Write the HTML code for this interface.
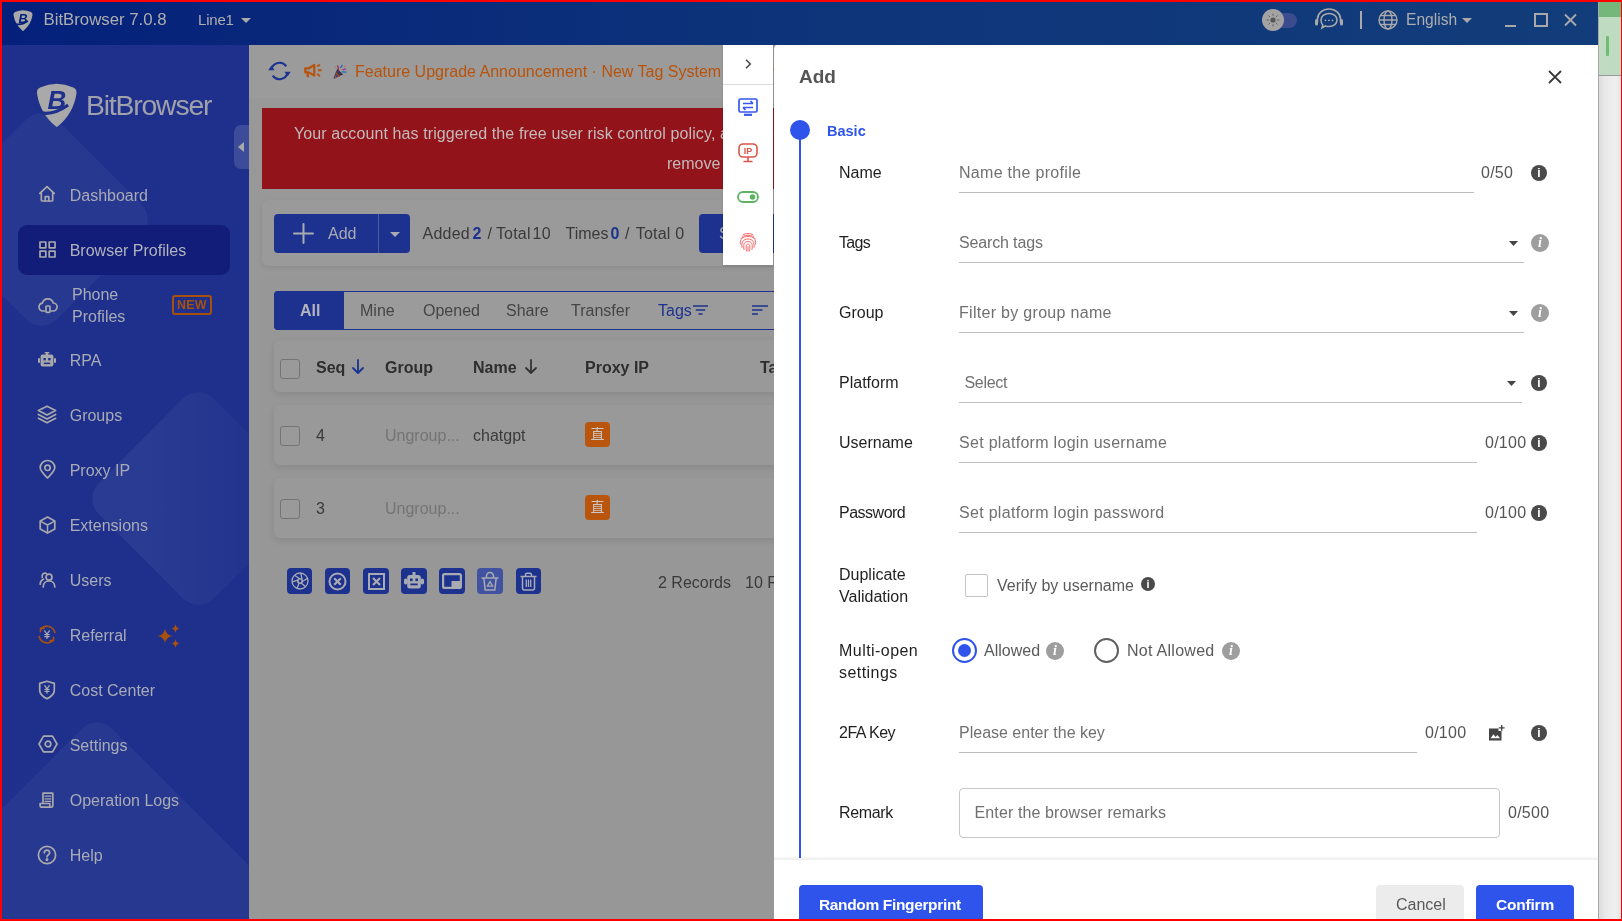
<!DOCTYPE html>
<html lang="en">
<head>
<meta charset="utf-8">
<title>BitBrowser</title>
<style>
*{box-sizing:border-box;margin:0;padding:0}
html,body{width:1622px;height:921px;overflow:hidden;background:#ff0000}
body{font-family:"Liberation Sans","Noto Sans CJK SC",sans-serif;font-size:16px;color:#222;position:relative}
.abs{position:absolute}
.t{position:absolute;white-space:nowrap;line-height:20px;height:20px}
svg{position:absolute;overflow:visible}
/* ---------- frame ---------- */
#app{will-change:transform;position:absolute;left:2px;top:2px;width:1619px;height:917px;overflow:hidden;background:#999}
/* ---------- titlebar ---------- */
#titlebar{position:absolute;left:0;top:0;width:1596px;height:43px;z-index:5;background:linear-gradient(90deg,#04207b 0%,#08267a 16%,#0d347a 49%,#123d7a 100%)}
#titlebar .t{color:#aeaeae;font-size:16px}
/* ---------- sidebar ---------- */
#sidebar{position:absolute;left:0;top:42px;width:247px;height:875px;background:#1e308c;overflow:hidden}
#sidebar .mi{position:absolute;left:67.700px;margin-top:1px;color:#a9abb5;font-size:16px;line-height:22px;white-space:nowrap}
#sidebar .active{position:absolute;left:16px;top:181px;width:212px;height:50px;border-radius:9px;background:#111d78}

#sidebar .ic{fill:none;stroke:#a9a9ab;stroke-width:1.700;stroke-linecap:round;stroke-linejoin:round}
#sidebar .dia{transform:rotate(45deg);border-radius:22px;background:rgba(255,255,255,.045)}
/* ---------- main ---------- */
#main{position:absolute;left:247px;top:42px;width:525px;height:875px;background:#989898;overflow:hidden}

.cb{width:20px;height:20px;margin:-.5px 0 0 -1px;border:1px solid #747474;border-radius:3px;background:#9a9a9a}
.badge{width:25px;height:25px;border-radius:4px;background:#b9550c;color:#c9c9c9;font-size:14px;line-height:25px;text-align:center;font-family:"Liberation Sans","Noto Sans CJK SC",sans-serif}
.tb{width:26px;height:26px;border-radius:4px;background:#1d318f}
.tb svg{position:absolute}
.ct{letter-spacing:.25px}
#main .t{margin-top:1px}
/* ---------- drawer ---------- */
#drawer{position:absolute;left:772px;top:42px;width:824px;height:875px;background:#fff;overflow:hidden;border-radius:5px 0 0 0}

#drawer .lb{left:68px;font-size:16px;color:#1f1f1f}
#drawer .ph{left:188px;font-size:16px;color:#707070;letter-spacing:.3px}
#drawer .ul{left:188px;height:1px;background:#bdbdbd}
#drawer .ct{font-size:16px;color:#555}
#drawer .car{fill:#444}
.inf{width:16px;height:16px;border-radius:50%;background:#4a4a4a;color:#fff;font-size:12px;font-weight:bold;line-height:16px;text-align:center;font-family:"Liberation Sans",sans-serif}
.inf.g{background:#9e9e9e;font-family:"Liberation Serif",serif;font-style:italic;font-size:14px;width:18px;height:18px;line-height:18px}
.inf.sm{width:14px;height:14px;line-height:14px;font-size:11px}
#ftb{position:absolute;left:721px;top:42px;width:50px;height:221px;background:#fff;box-shadow:0 1px 2px rgba(0,0,0,.18)}
/* ---------- right strip ---------- */
#strip{position:absolute;left:1596px;top:0;width:23px;height:917px;background:linear-gradient(90deg,#dcdcdc 0,#e9e9e9 6px,#efefef 16px,#e6e6e6 22px);border-left:1px solid #a9a9a9}
</style>
</head>
<body>
<div id="app">

<!-- TITLEBAR -->
<div id="titlebar">
  <svg style="left:11px;top:7px" width="20" height="22" viewBox="0 0 40 44"><path d="M4 6Q20 -1 36 6Q39.500 7.500 39 12Q36 31 21 43.500Q20 44.500 19 43.500Q4 31 1 12Q.500 7.500 4 6Z" fill="#a9a9a9"/><path d="M5 30Q16 33 30 24" fill="none" stroke="#04207b" stroke-width="3.500"/><text x="20" y="28" font-family="Liberation Sans,sans-serif" font-size="25" font-weight="bold" font-style="italic" text-anchor="middle" fill="#04207b">B</text></svg>
  <div class="t" style="left:41.500px;top:8px;font-size:16.800px">BitBrowser 7.0.8</div>
  <div class="t" style="left:196px;top:8px;font-size:15px;letter-spacing:-.2px">Line1</div>
  <svg style="left:239px;top:16px" width="10" height="5" viewBox="0 0 10 5" fill="#a9a9a9"><path d="M0 0h10L5 5z"/></svg>
  <!-- theme toggle -->
  <div class="abs" style="left:1262px;top:11px;width:33px;height:15px;border-radius:8px;background:#3a4b8e"></div>
  <div class="abs" style="left:1260px;top:7px;width:22px;height:22px;border-radius:50%;background:#a3a3a3"></div>
  <svg style="left:1264px;top:11px" width="14" height="14" viewBox="0 0 14 14" fill="#555" stroke="#555" stroke-width="1"><circle cx="7" cy="7" r="2.600" stroke="none"/><path d="M7 .800v1.800M7 11.400v1.800M.800 7h1.800M11.400 7h1.800M2.600 2.600l1.200 1.200M10.200 10.200l1.200 1.200M2.600 11.400l1.200-1.200M10.200 3.800l1.200-1.200"/></svg>
  <!-- support -->
  <svg style="left:1312px;top:6px" width="30" height="23" viewBox="0 0 30 23" fill="none" stroke="#a9a9a9" stroke-width="1.600"><path d="M3.500 14.500V11a11.500 10 0 0 1 23 0v3.500"/><rect x="1" y="11" width="3" height="6.500" rx="1.500" fill="#a9a9a9" stroke="none"/><rect x="26" y="11" width="3" height="6.500" rx="1.500" fill="#a9a9a9" stroke="none"/><path d="M15 5.500c4.800 0 8 2.800 8 6.500s-3.200 6.500-8 6.500c-1.300 0-2.400-.2-3.500-.6L8 20l.8-3c-1.200-1.200-1.800-2.900-1.800-5 0-3.700 3.200-6.500 8-6.500z"/><circle cx="11.500" cy="12.300" r=".9" fill="#a9a9a9" stroke="none"/><circle cx="15" cy="12.300" r=".9" fill="#a9a9a9" stroke="none"/><circle cx="18.500" cy="12.300" r=".9" fill="#a9a9a9" stroke="none"/></svg>
  <div class="abs" style="left:1358px;top:9px;width:2px;height:18px;background:#a9a9a9"></div>
  <!-- globe -->
  <svg style="left:1376px;top:8px" width="20" height="20" viewBox="0 0 20 20" fill="none" stroke="#a9a9a9" stroke-width="1.400"><circle cx="10" cy="10" r="9"/><ellipse cx="10" cy="10" rx="4" ry="9"/><path d="M1 10h18M2.300 5.500h15.400M2.300 14.500h15.400"/></svg>
  <div class="t" style="left:1404px;top:8px;font-size:15.600px">English</div>
  <svg style="left:1460px;top:16px" width="10" height="5" viewBox="0 0 10 5" fill="#a9a9a9"><path d="M0 0h10L5 5z"/></svg>
  <!-- window controls -->
  <div class="abs" style="left:1503px;top:23px;width:11px;height:2px;background:#a9a9a9"></div>
  <div class="abs" style="left:1532px;top:11px;width:14px;height:14px;border:2px solid #a9a9a9"></div>
  <svg style="left:1562px;top:12px" width="13" height="12" viewBox="0 0 13 12" stroke="#a9a9a9" stroke-width="1.900"><path d="M1 .500l11 11M12 .500L1 11.500"/></svg>
</div>

<!-- SIDEBAR -->
<div id="sidebar">
  <!-- decorative diamonds -->
  <div class="abs dia" style="left:-42.500px;top:93.500px;width:163px;height:163px"></div>
  <div class="abs dia" style="left:115px;top:372.500px;width:163px;height:163px;background:linear-gradient(45deg,rgba(255,255,255,.05) 30%,rgba(255,255,255,.015) 75%)"></div>
  <div class="abs dia" style="left:-75px;top:740px;width:340px;height:340px;border-radius:21px"></div>
  <!-- logo -->
  <svg style="left:33.800px;top:36.500px" width="41.500" height="46" viewBox="0 0 40 44"><path d="M4 6Q20 -1 36 6Q39.500 7.500 39 12Q36 31 21 43.500Q20 44.500 19 43.500Q4 31 1 12Q.500 7.500 4 6Z" fill="#a9a9a9"/><path d="M5 30.500Q17 33 31 23" fill="none" stroke="#1e308c" stroke-width="3"/><text x="20" y="27" font-family="Liberation Sans,sans-serif" font-size="25" font-weight="bold" font-style="italic" text-anchor="middle" fill="#1e308c">B</text></svg>
  <div class="t" style="left:84px;top:44px;height:34px;line-height:34px;font-size:28.400px;letter-spacing:-1.200px;color:#a0a1aa">BitBrowser</div>
  <!-- collapse handle -->
  <div class="abs" style="left:232px;top:81px;width:15px;height:44px;border-radius:7px 0 0 7px;background:#3c4c9a"></div>
  <svg style="left:236px;top:98px" width="6" height="10" viewBox="0 0 6 10" fill="#a9a9a9"><path d="M6 0v10L0 5z"/></svg>

  <div class="active"></div>
  <!-- icons -->
  <svg class="ic" style="left:36px;top:141px" width="18" height="18" viewBox="0 0 18 18"><path d="M1.800 8.300L9 1.600l7.200 6.700M3.300 7.200V15a1 1 0 0 0 1 1h9.400a1 1 0 0 0 1-1V7.200"/><path d="M7.200 16v-4.300h3.600V16"/></svg>
  <svg class="ic" style="left:36.500px;top:197px" width="17" height="17" viewBox="0 0 17 17" stroke-linejoin="miter"><rect x="1" y="1" width="5.800" height="5.800"/><rect x="10.200" y="1" width="5.800" height="5.800"/><rect x="1" y="10.200" width="5.800" height="5.800"/><rect x="10.200" y="10.200" width="5.800" height="5.800"/></svg>
  <svg class="ic" style="left:36px;top:254px" width="20" height="15" viewBox="0 0 20 15"><path d="M6.500 13H5a4 4 0 0 1-.6-7.950A5.600 5.600 0 0 1 15.200 5 4 4 0 0 1 15 13h-1.500"/><rect x="8" y="8" width="4" height="6.300" rx=".8"/></svg>
  <svg style="left:36px;top:307.500px" width="18" height="15" viewBox="0 0 18 15" fill="#a9a9ab"><rect x="8" y="0" width="2" height="3"/><rect x="6.500" y="0" width="5" height="1.600" rx=".8"/><rect x="2.600" y="2.600" width="12.800" height="12" rx="2"/><rect x="0" y="6" width="2" height="5" rx="1"/><rect x="16" y="6" width="2" height="5" rx="1"/><rect x="5.400" y="6" width="2.400" height="2.400" fill="#1e308c"/><rect x="10.200" y="6" width="2.400" height="2.400" fill="#1e308c"/><rect x="5.800" y="10.600" width="6.400" height="1.500" fill="#1e308c"/></svg>
  <svg class="ic" style="left:35px;top:360.500px" width="20" height="19" viewBox="0 0 20 19"><path d="M10 1.200L18.600 5.600 10 10 1.400 5.600z"/><path d="M1.400 9.500L10 13.900l8.600-4.400"/><path d="M1.400 13.300L10 17.700l8.600-4.400"/></svg>
  <svg class="ic" style="left:36.500px;top:416px" width="17" height="19" viewBox="0 0 17 19"><path d="M8.500 18C4 13.500 1.200 10.800 1.200 7.800a7.300 7.300 0 0 1 14.600 0c0 3-2.800 5.700-7.300 10.200z"/><circle cx="8.500" cy="7.800" r="2.700"/></svg>
  <svg class="ic" style="left:36.500px;top:471.500px" width="17" height="18" viewBox="0 0 17 18"><path d="M8.500 1L15.800 5v8L8.500 17 1.200 13V5z"/><path d="M8.500 17V9M8.500 9L2.200 5.600M8.500 9l6.300-3.400" stroke-width="1.500"/></svg>
  <svg class="ic" style="left:36.500px;top:527px" width="17" height="17" viewBox="0 0 17 17"><circle cx="10" cy="6.200" r="3"/><path d="M4.200 16c0-3.600 2.400-6 5.800-6s5.800 2.400 5.800 6"/><path d="M7.600 2.600a3 3 0 0 0-4.300 3.800M4.400 8.200C2.400 9 1.200 10.800 1.200 13.200"/></svg>
  <svg style="left:35px;top:581px" width="20" height="19" viewBox="0 0 20 19" fill="none" stroke="#a8510d" stroke-width="1.600" stroke-linecap="round"><path d="M2.200 11.500A8 8 0 0 0 16 15.200M17.800 7.500A8 8 0 0 0 4 3.800"/><path d="M16.500 12.200v3.400h-3.400M3.500 6.800V3.400h3.400" stroke-linejoin="round"/><path d="M7.600 5.800L10 9l2.400-3.200M10 9v4.400M7.800 9.600h4.400M7.800 11.600h4.400" stroke="#a9a9ab" stroke-width="1.200"/></svg>
  <svg class="ic" style="left:36px;top:635.500px" width="18" height="20" viewBox="0 0 18 20"><path d="M9 1.200l7.300 2.200v6.800c0 3.600-2.800 6.400-7.300 8.600C4.500 16.600 1.700 13.800 1.700 10.200V3.400z"/><path d="M6.800 5.600L9 8.800l2.200-3.200M9 8.800v4.400M7 9.400h4M7 11.400h4" stroke-width="1.200"/></svg>
  <svg class="ic" style="left:35.500px;top:691px" width="20" height="18" viewBox="0 0 20 18"><path d="M5.500 1.200h9L19 9l-4.500 7.800h-9L1 9z"/><circle cx="10" cy="9" r="2.800"/></svg>
  <svg class="ic" style="left:37px;top:747.500px" width="16" height="16" viewBox="0 0 16 16" stroke-linecap="butt"><path d="M4 11.500V1.200h9.800v12.500c0 .9-.7 1.400-1.500 1.400H2.600c-.9 0-1.500-.6-1.500-1.400v-2.200h9.700v2.100"/><path d="M6 4.200h5.800M6 6.800h5.800M6 9.300h5.800" stroke-width="1.300"/></svg>
  <svg class="ic" style="left:35px;top:800.500px" width="20" height="20" viewBox="0 0 20 20"><circle cx="10" cy="10" r="8.600"/><path d="M7.300 7.800a2.700 2.700 0 0 1 5.400 0c0 1.900-2.700 2-2.700 4" /><circle cx="10" cy="14.600" r=".7" fill="#a9a9ab"/></svg>

  <div class="mi" style="top:140px">Dashboard</div>
  <div class="mi" style="top:195px;color:#b2b3bd">Browser Profiles</div>
  <div class="mi" style="top:239px;left:70px">Phone<br>Profiles</div>
  <div class="mi" style="top:305px">RPA</div>
  <div class="mi" style="top:360px">Groups</div>
  <div class="mi" style="top:415px">Proxy IP</div>
  <div class="mi" style="top:470px">Extensions</div>
  <div class="mi" style="top:525px">Users</div>
  <div class="mi" style="top:580px">Referral</div>
  <div class="mi" style="top:635px">Cost Center</div>
  <div class="mi" style="top:690px">Settings</div>
  <div class="mi" style="top:745px">Operation Logs</div>
  <div class="mi" style="top:800px">Help</div>
  <!-- NEW badge -->
  <div class="abs" style="left:170px;top:250.500px;width:40px;height:20px;border:2px solid #a8510d;border-radius:3px;color:#a8510d;font-size:12.500px;font-weight:bold;line-height:16.500px;text-align:center;letter-spacing:.2px">NEW</div>
  <!-- sparkle -->
  <svg style="left:155px;top:579.500px" width="23" height="24" viewBox="0 0 23 24" fill="#a8510d"><path d="M8 4.500Q8.800 11 15.500 12 8.800 13 8 19.500 7.200 13 .500 12 7.200 11 8 4.500z"/><path d="M18.500 0Q19 4 22.500 4.500 19 5 18.500 9 18 5 14.500 4.500 18 4 18.500 0z"/><path d="M18.500 15Q19 19 22.500 19.500 19 20 18.500 24 18 20 14.500 19.500 18 19 18.500 15z"/></svg>
</div>

<!-- MAIN -->
<div id="main">
  <!-- top announcement bar -->
  <div class="abs" style="left:0;top:0;width:524px;height:54px;background:#9b9b9b"></div>
  <svg style="left:19px;top:16px" width="23" height="22" viewBox="0 0 23 22" fill="none" stroke="#1c3290" stroke-width="2"><path d="M3.400 9.500A8.300 8.300 0 0 1 18.300 6.300"/><path d="M19.600 12.500A8.300 8.300 0 0 1 4.700 15.700"/><path d="M.300 10.300L3.400 5.500l3.100 4.800z" fill="#1c3290" stroke="none"/><path d="M22.700 11.700l-3.100 4.800-3.100-4.800z" fill="#1c3290" stroke="none"/></svg>
  <svg style="left:54.500px;top:18.500px" width="20" height="16" viewBox="0 0 20 16" fill="none" stroke="#b9520a" stroke-width="2.200" stroke-linejoin="round"><path d="M1.300 5.300h3.600L10.300 2v10.600L4.900 9.400H1.300z"/><path d="M3.800 9.600v4.600" stroke-width="2.400"/><path d="M13.300 3.600l2.600-2.200M14 7.300h3.600M13.300 11l2.600 2.200" stroke-width="1.900"/></svg>
  <svg style="left:84px;top:20px" width="15" height="15" viewBox="0 0 15 15"><path d="M.500 14.500L4.200 4.800l6 5.800z" fill="#3b3350"/><path d="M1.600 11.600l2 2.200M2.700 8.700l3.800 3.900" stroke="#b9520a" stroke-width="1.300"/><path d="M1 13.300l1.200 1M2.100 10.200l2.900 3" stroke="#2b44b0" stroke-width="1.100"/><path d="M4.600 1.300l1 5" stroke="#a82a4a" stroke-width="1.300"/><path d="M7.500 4.200c.3-1.600 1.300-1.600 1.600-3.400" stroke="#2a62b8" stroke-width="1.300" fill="none"/><path d="M9.600 6c1-.9 2.200-.3 3.200-1.200" stroke="#a02aa0" stroke-width="1.300" fill="none"/><path d="M8.600 8.200c1.800-.9 3.400.4 5 -.2" stroke="#2a72b8" stroke-width="1.400" fill="none"/><circle cx="11.500" cy="2.200" r=".7" fill="#b56a6a"/><circle cx="2.600" cy="2.800" r=".6" fill="#b56a6a"/><circle cx="11.800" cy="11" r=".6" fill="#b58a6a"/></svg>
  <div class="t" style="left:106px;top:17px;font-size:16px;color:#b9520a">Feature Upgrade Announcement · New Tag System Launched</div>

  <!-- red banner -->
  <div class="abs" style="left:13px;top:64px;width:520px;height:81px;background:#93131b"></div>
  <div class="t" style="left:45px;top:79px;font-size:16px;letter-spacing:.1px;color:#c2baba">Your account has triggered the free user risk control policy, and the</div>
  <div class="t" style="left:418px;top:109px;font-size:16px;color:#c2baba">remove&nbsp;it</div>

  <!-- card 1 -->
  <div class="abs" style="left:13px;top:156px;width:520px;height:66px;background:#9a9a9a;border-radius:6px 0 0 6px;box-shadow:0 2px 4px rgba(0,0,0,.08)"></div>
  <div class="abs" style="left:25px;top:170px;width:136px;height:39px;background:#1d318f;border-radius:4px"></div>
  <div class="abs" style="left:129px;top:170px;width:1px;height:39px;background:#4a5a9c"></div>
  <svg style="left:44px;top:179px" width="21" height="21" viewBox="0 0 21 21" stroke="#a9abb3" stroke-width="2" stroke-linecap="round"><path d="M10.5 1v19M1 10.5h19"/></svg>
  <div class="t" style="left:79px;top:179px;font-size:16px;color:#a9abb3">Add</div>
  <svg style="left:141px;top:188px" width="10" height="5" viewBox="0 0 10 5" fill="#a9abb3"><path d="M0 0h10L5 5z"/></svg>
  <div class="t" style="left:173.500px;top:179px;font-size:16px;color:#3a3a3a"><span style="letter-spacing:.25px">Added</span><b style="color:#1c3290;margin:0 6px 0 2.500px">2</b>/<span style="margin-left:4px;letter-spacing:.2px;word-spacing:-2.700px">Total 10</span></div>
  <div class="t" style="left:316.500px;top:179px;font-size:16px;color:#3a3a3a">Times<b style="color:#1c3290;margin:0 5.500px 0 2px">0</b>/<span style="margin-left:2px;letter-spacing:.2px"> Total 0</span></div>
  <div class="abs" style="left:450px;top:170px;width:100px;height:39px;background:#1d318f;border-radius:4px"></div>
  <div class="t" style="left:470px;top:179px;font-size:16px;color:#a9abb3">Search</div>

  <!-- card 2 -->
  <div class="abs" style="left:13px;top:234px;width:520px;height:660px;background:#979797;border-radius:6px 0 0 0"></div>
  <!-- tabs -->
  <div class="abs" style="left:25px;top:247px;width:520px;height:39px;background:#9b9b9b;border:1px solid #1d318f;border-radius:4px 0 0 4px"></div>
  <div class="abs" style="left:25px;top:247px;width:70px;height:39px;background:#1d318f;border-radius:4px 0 0 4px"></div>
  <div class="t" style="left:51px;top:256px;font-size:16px;font-weight:bold;color:#b3b5bd">All</div>
  <div class="t" style="left:111px;top:256px;font-size:16px;color:#454545">Mine</div>
  <div class="t" style="left:174px;top:256px;font-size:16px;color:#454545">Opened</div>
  <div class="t" style="left:257px;top:256px;font-size:16px;color:#454545">Share</div>
  <div class="t" style="left:322px;top:256px;font-size:16px;color:#454545">Transfer</div>
  <div class="t" style="left:409px;top:256px;font-size:16px;color:#1c3290">Tags</div>
  <svg style="left:443.500px;top:261px" width="15" height="10" viewBox="0 0 15 10" stroke="#1c3290" stroke-width="1.500" stroke-linecap="butt"><path d="M0 1h15M2.800 5h9.400M5.500 9h4"/></svg>
  <svg style="left:503px;top:261px" width="16" height="10" viewBox="0 0 16 10" stroke="#1c3290" stroke-width="1.500"><path d="M0 1h16M0 5h10.500M0 9h6"/></svg>

  <!-- table header -->
  <div class="abs" style="left:25px;top:296px;width:520px;height:52px;background:#999;border-radius:6px 0 0 6px;box-shadow:0 3px 7px rgba(0,0,0,.09)"></div>
  <div class="abs cb" style="left:32px;top:315px"></div>
  <div class="t" style="left:67px;top:313px;font-size:16px;font-weight:bold;color:#2e2e2e">Seq</div>
  <svg style="left:103px;top:315px" width="12" height="15" viewBox="0 0 12 15" fill="none" stroke="#1c3290" stroke-width="1.8" stroke-linecap="round" stroke-linejoin="round"><path d="M6 1v13M1 9l5 5 5-5"/></svg>
  <div class="t" style="left:136px;top:313px;font-size:16px;font-weight:bold;color:#2e2e2e">Group</div>
  <div class="t" style="left:224px;top:313px;font-size:16px;font-weight:bold;color:#2e2e2e">Name</div>
  <svg style="left:276px;top:315px" width="12" height="15" viewBox="0 0 12 15" fill="none" stroke="#333" stroke-width="1.8" stroke-linecap="round" stroke-linejoin="round"><path d="M6 1v13M1 9l5 5 5-5"/></svg>
  <div class="t" style="left:336px;top:313px;font-size:16px;font-weight:bold;color:#2e2e2e">Proxy IP</div>
  <div class="t" style="left:511px;top:313px;font-size:16px;font-weight:bold;color:#2e2e2e">Tags</div>

  <!-- row 1 -->
  <div class="abs" style="left:25px;top:361px;width:520px;height:60px;background:#999;border-radius:6px 0 0 6px;box-shadow:0 3px 7px rgba(0,0,0,.09)"></div>
  <div class="abs cb" style="left:32px;top:382px"></div>
  <div class="t" style="left:67px;top:381px;font-size:16px;color:#3a3a3a">4</div>
  <div class="t" style="left:136px;top:381px;font-size:16px;color:#747474">Ungroup...</div>
  <div class="t" style="left:224px;top:381px;font-size:16px;color:#3a3a3a">chatgpt</div>
  <div class="abs badge" style="left:336px;top:378px">直</div>

  <!-- row 2 -->
  <div class="abs" style="left:25px;top:434px;width:520px;height:60px;background:#999;border-radius:6px 0 0 6px;box-shadow:0 3px 7px rgba(0,0,0,.09)"></div>
  <div class="abs cb" style="left:32px;top:455px"></div>
  <div class="t" style="left:67px;top:454px;font-size:16px;color:#3a3a3a">3</div>
  <div class="t" style="left:136px;top:454px;font-size:16px;color:#747474">Ungroup...</div>
  <div class="abs badge" style="left:336px;top:451px">直</div>

  <!-- bottom tools -->
  <div class="abs tb" style="left:38px;top:524px;width:25px"><svg width="18" height="18" viewBox="0 0 18 18" fill="none" stroke="#a9abb3" stroke-width="1.300" style="left:3.500px;top:3.500px"><circle cx="9" cy="9" r="8"/><circle cx="9" cy="9" r="2.200" stroke-width="1.600"/><path d="M9.800 1L11 7.200M16.600 6.200L11 9.800M14.600 14.800l-4.400-3.900M6 16.400l2.200-5.400M1.200 9.800L7 8.200M3.600 3.200L8.600 6.800"/></svg></div>
  <div class="abs tb" style="left:76px;top:524px;width:25px"><svg width="19" height="19" viewBox="0 0 19 19" fill="none" stroke="#a9abb3" stroke-width="2" style="left:3px;top:3.500px"><circle cx="9.500" cy="9.500" r="8"/><path d="M6.200 6.200l6.600 6.600M12.800 6.200l-6.600 6.600" stroke-width="2.200"/></svg></div>
  <div class="abs tb" style="left:114px;top:524px"><svg width="17" height="17" viewBox="0 0 17 17" fill="none" stroke="#a9abb3" stroke-width="2" style="left:4.500px;top:4.500px"><rect x="1" y="1" width="15" height="15"/><path d="M5 5l7 7M12 5l-7 7" stroke-width="2.200"/></svg></div>
  <div class="abs tb" style="left:152px;top:524px"><svg width="20" height="18" viewBox="0 0 20 18" style="left:3px;top:4px" fill="#a9abb3"><rect x="8.500" y="0" width="3" height="4"/><rect x="3.200" y="3" width="13.600" height="13.500" rx="2.500"/><rect x="0" y="6.500" width="3.600" height="6" rx="1.800"/><rect x="16.400" y="6.500" width="3.600" height="6" rx="1.800"/><rect x="6" y="6.500" width="2.600" height="2.600" fill="#1d318f"/><rect x="11.400" y="6.500" width="2.600" height="2.600" fill="#1d318f"/><rect x="6.300" y="11.500" width="7.400" height="1.800" fill="#1d318f"/></svg></div>
  <div class="abs tb" style="left:190px;top:524px"><svg width="20" height="16" viewBox="0 0 20 16" style="left:3px;top:5px"><rect x="1.100" y="1.100" width="17.800" height="13.800" rx="1.500" fill="none" stroke="#a9abb3" stroke-width="2.200"/><rect x="9.500" y="8" width="8.500" height="6" fill="#a9abb3"/></svg></div>
  <div class="abs tb" style="left:228px;top:524px;background:#4153a0"><svg width="18" height="19" viewBox="0 0 18 19" fill="none" stroke="#a9abb3" stroke-width="1.500" style="left:4px;top:3.500px"><path d="M.500 6h17M5.500 6V4a3.500 3.500 0 0 1 7 0V6M2.800 6l1.400 12h9.600L15.200 6"/><path d="M9 9.500l2.600 4.600H6.400z" stroke-width="1.300"/></svg></div>
  <div class="abs tb" style="left:267px;top:524px;width:25px"><svg width="17" height="19" viewBox="0 0 17 19" fill="none" stroke="#a9abb3" stroke-width="1.500" style="left:4px;top:3.500px"><path d="M.500 4.500h16M5.500 4.500V2.800a1.500 1.500 0 0 1 1.500-1.500h3a1.500 1.500 0 0 1 1.500 1.500V4.500M2.500 4.500v11.500a2 2 0 0 0 2 2h8a2 2 0 0 0 2-2V4.500"/><path d="M6.300 7.500v7.500M8.500 7.500v7.500M10.700 7.500v7.500" stroke-width="1.300"/></svg></div>
  <div class="t" style="left:409px;top:528px;font-size:16px;color:#3a3a3a">2 Records</div>
  <div class="t" style="left:496px;top:528px;font-size:16px;color:#3a3a3a">10 Records/Page</div>
</div>

<!-- DRAWER -->
<div id="drawer"><div id="dw" style="position:absolute;left:-3px;top:-1px;width:827px;height:877px">
  <div class="t" style="left:28px;top:24px;font-size:19px;font-weight:bold;color:#555">Add</div>
  <svg style="left:777px;top:27px" width="14" height="14" viewBox="0 0 14 14" stroke="#3a3a3a" stroke-width="1.8" stroke-linecap="butt"><path d="M1 1l12 12M13 1L1 13"/></svg>

  <!-- timeline -->
  <div class="abs" style="left:28px;top:88px;width:2px;height:728px;background:#2f54eb"></div>
  <div class="abs" style="left:19px;top:77px;width:20px;height:20px;border-radius:50%;background:#2f54eb"></div>
  <div class="t" style="left:56px;top:78px;font-size:14.5px;font-weight:bold;color:#2f54eb">Basic</div>

  <!-- Name -->
  <div class="t lb" style="top:120px">Name</div>
  <div class="t ph" style="top:120px">Name the profile</div>
  <div class="abs ul" style="top:149px;width:515px"></div>
  <div class="t ct" style="left:710px;top:120px">0/50</div>
  <div class="abs inf" style="left:760px;top:122px">i</div>

  <!-- Tags -->
  <div class="t lb" style="top:190px;letter-spacing:-.7px">Tags</div>
  <div class="t ph" style="top:190px;letter-spacing:-.15px">Search tags</div>
  <div class="abs ul" style="top:219px;width:565px"></div>
  <svg class="car" style="left:738px;top:198px" width="9" height="5" viewBox="0 0 9 5"><path d="M0 0h9L4.500 5z"/></svg>
  <div class="abs inf g" style="left:760px;top:191px">i</div>

  <!-- Group -->
  <div class="t lb" style="top:260px">Group</div>
  <div class="t ph" style="top:260px">Filter by group name</div>
  <div class="abs ul" style="top:289px;width:565px"></div>
  <svg class="car" style="left:738px;top:268px" width="9" height="5" viewBox="0 0 9 5"><path d="M0 0h9L4.500 5z"/></svg>
  <div class="abs inf g" style="left:760px;top:261px">i</div>

  <!-- Platform -->
  <div class="t lb" style="top:330px">Platform</div>
  <div class="t ph" style="top:330px;left:193.500px;letter-spacing:-.3px">Select</div>
  <div class="abs ul" style="top:359px;width:563px"></div>
  <svg class="car" style="left:736px;top:338px" width="9" height="5" viewBox="0 0 9 5"><path d="M0 0h9L4.500 5z"/></svg>
  <div class="abs inf" style="left:760px;top:332px">i</div>

  <!-- Username -->
  <div class="t lb" style="top:390px">Username</div>
  <div class="t ph" style="top:390px">Set platform login username</div>
  <div class="abs ul" style="top:419px;width:518px"></div>
  <div class="t ct" style="left:714px;top:390px">0/100</div>
  <div class="abs inf" style="left:760px;top:392px">i</div>

  <!-- Password -->
  <div class="t lb" style="top:460px;letter-spacing:-.5px">Password</div>
  <div class="t ph" style="top:460px">Set platform login password</div>
  <div class="abs ul" style="top:489px;width:518px"></div>
  <div class="t ct" style="left:714px;top:460px">0/100</div>
  <div class="abs inf" style="left:760px;top:462px">i</div>

  <!-- Duplicate Validation -->
  <div class="t lb" style="top:521px;height:44px;line-height:22px">Duplicate<br>Validation</div>
  <div class="abs" style="left:194px;top:531px;width:23px;height:23px;border:1px solid #c4c4c4;border-radius:2px;background:#fff"></div>
  <div class="t" style="left:226px;top:533px;font-size:16px;color:#5a5a5a">Verify by username</div>
  <div class="abs inf sm" style="left:370px;top:534px">i</div>

  <!-- Multi-open -->
  <div class="t lb" style="top:597px;height:44px;line-height:22px;letter-spacing:.45px">Multi-open<br>settings</div>
  <div class="abs" style="left:180.500px;top:595px;width:25px;height:25px;border:2px solid #2f54eb;border-radius:50%"></div>
  <div class="abs" style="left:186.500px;top:601px;width:13px;height:13px;background:#2f54eb;border-radius:50%"></div>
  <div class="t" style="left:213px;top:598px;font-size:16px;color:#5a5a5a">Allowed</div>
  <div class="abs inf g" style="left:275px;top:599px">i</div>
  <div class="abs" style="left:322.500px;top:595px;width:25px;height:25px;border:2px solid #5f5f5f;border-radius:50%"></div>
  <div class="t" style="left:356px;top:598px;font-size:16px;letter-spacing:.27px;color:#5a5a5a">Not Allowed</div>
  <div class="abs inf g" style="left:451px;top:599px">i</div>

  <!-- 2FA -->
  <div class="t lb" style="top:680px;letter-spacing:-.5px">2FA Key</div>
  <div class="t ph" style="top:680px;letter-spacing:0">Please enter the key</div>
  <div class="abs ul" style="top:709px;width:458px"></div>
  <div class="t ct" style="left:654px;top:680px">0/100</div>
  <svg style="left:717px;top:682px" width="17" height="17" viewBox="0 0 17 17" fill="#444"><path d="M1 3.500h9.500v2.500h3v9.500H1z"/><path d="M13 0h1.400v2.200h2.200v1.400h-2.200v2.200H13V3.600h-2.200V2.200H13z"/><path d="M2.500 13.200l3-4 2.200 2.800 1.600-2 2.800 3.200z" fill="#fff"/></svg>
  <div class="abs inf" style="left:760px;top:682px">i</div>

  <!-- Remark -->
  <div class="t lb" style="top:760px;letter-spacing:-.35px">Remark</div>
  <div class="abs" style="left:188px;top:745px;width:541px;height:50px;border:1px solid #c8c8c8;border-radius:4px"></div>
  <div class="t ph" style="top:760px;left:203.500px;letter-spacing:.12px">Enter the browser remarks</div>
  <div class="t ct" style="left:737px;top:760px">0/500</div>

  <!-- footer -->
  <div class="abs" style="left:0;top:815px;width:829px;height:64px;background:#fff;border-top:2px solid #f1f1f1;box-shadow:0 -1px 2px rgba(0,0,0,.03)"></div>
  <div class="abs" style="left:28px;top:842px;width:184px;height:40px;background:#2f54eb;border-radius:4px"></div>
  <div class="t" style="left:48px;top:852px;font-size:15.500px;letter-spacing:-.35px;color:#fff;font-weight:bold">Random Fingerprint</div>
  <div class="abs" style="left:605px;top:842px;width:88px;height:40px;background:#ececec;border-radius:4px"></div>
  <div class="t" style="left:625px;top:852px;font-size:16px;color:#5a5a5a">Cancel</div>
  <div class="abs" style="left:705px;top:842px;width:98px;height:40px;background:#2f54eb;border-radius:4px"></div>
  <div class="t" style="left:725px;top:852px;font-size:15.500px;letter-spacing:-.2px;color:#fff;font-weight:bold">Confirm</div>
</div></div>

<!-- FLOATING TOOLBAR -->
<div id="ftb">
  <svg style="left:22px;top:15px" width="7" height="10" viewBox="0 0 7 10" fill="none" stroke="#444" stroke-width="1.500"><path d="M1 .700l4.300 4.300L1 9.300"/></svg>
  <div class="abs" style="left:0;top:40px;width:50px;height:1px;background:#dcdcdc"></div>
  <svg style="left:15px;top:54px" width="20" height="18" viewBox="0 0 20 18" fill="none" stroke="#3557ee" stroke-width="1.700"><rect x="1" y="1" width="18" height="13" rx="1.500"/><path d="M5 5.500h10M12.500 3l2.500 2.500M15 9.500H5M7.500 12L5 9.500"/><path d="M6 16.800h8" stroke-width="2.200"/></svg>
  <svg style="left:15px;top:99px" width="20" height="20" viewBox="0 0 20 20" fill="none" stroke="#d9554b" stroke-width="1.600"><rect x="1" y="1" width="18" height="13" rx="4"/><path d="M10 14v4M5.500 18.500h9"/><text x="10" y="11.300" font-family="Liberation Sans,sans-serif" font-size="9" font-weight="bold" text-anchor="middle" fill="#d9554b" stroke="none">IP</text></svg>
  <svg style="left:14px;top:147px" width="22" height="12" viewBox="0 0 22 12"><rect x="1" y="1" width="20" height="10" rx="5" fill="none" stroke="#5db562" stroke-width="1.800"/><circle cx="15.500" cy="6" r="2.800" fill="#5db562"/></svg>
  <svg style="left:16px;top:188px" width="18" height="20" viewBox="0 0 18 20" fill="none" stroke="#f26a6a" stroke-width="1" stroke-linecap="round"><path d="M2 6.500C4 2 14 2 16 6.500"/><path d="M1.500 12C.5 7 4 4.500 9 4.500s8.500 2.500 7.500 7.500"/><path d="M3 15.500C2 10 4.500 7 9 7s7 3 6 8.500"/><path d="M5 17.500C4 12 5.500 9.500 9 9.500s5 2.500 4 8"/><path d="M7.500 19c-.8-4-.5-7 1.500-7s2.300 3 1.500 7"/><path d="M9 14.500V19"/><path d="M4 2.800C7 1 11 1 14 2.800"/></svg>
</div>

<!-- RIGHT STRIP -->
<div id="strip">
  <div class="abs" style="left:0;top:0;width:22px;height:15px;background:#75b77a"></div>
  <div class="abs" style="left:0;top:15px;width:22px;height:58px;background:#bfdcc2"></div>
  <div class="abs" style="left:0;top:73px;width:22px;height:1px;background:#999"></div>
  <div class="abs" style="left:7px;top:34px;width:3px;height:20px;background:#6fbd75;border-radius:1px"></div>
</div>

</div>
</body>
</html>
